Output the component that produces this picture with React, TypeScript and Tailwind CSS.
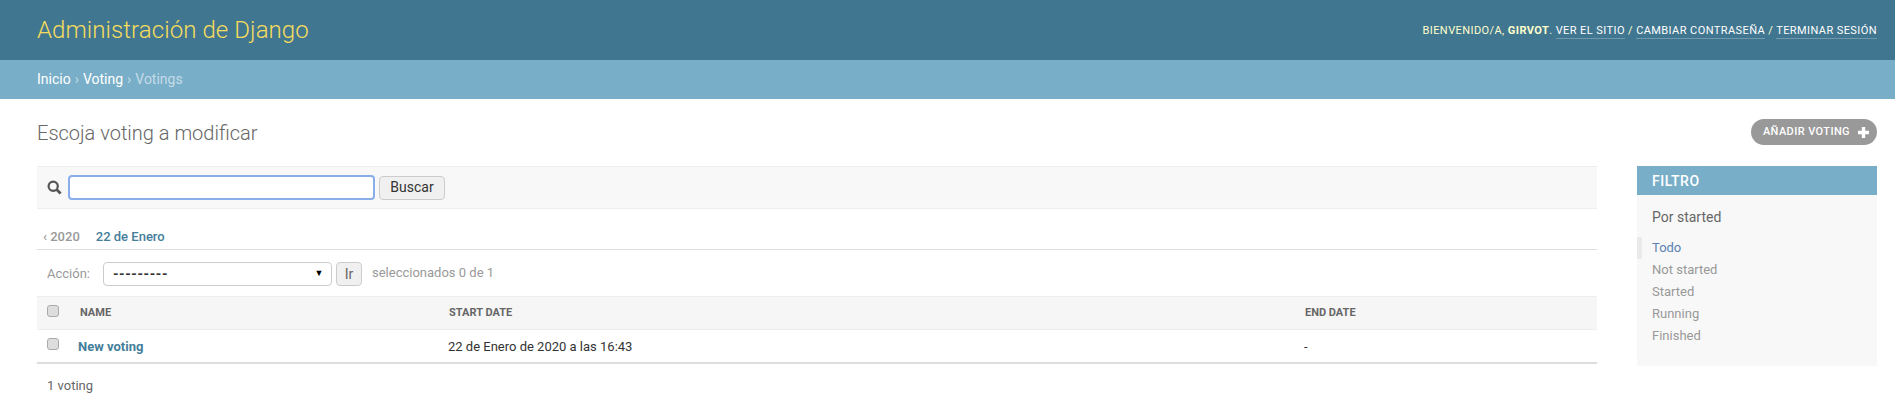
const Check = ({ className }: { className: string }) => (
  <span className={`block size-[12px] shrink-0 rounded-[3px] border border-[#aaa] bg-[#ddd] ${className}`} />
);

export default function App() {
  return (
    <div className="h-[401px] overflow-hidden bg-white font-['Roboto',sans-serif] font-normal text-[#333]">
      <header className="flex h-[60px] items-center justify-between bg-[#417690] pl-[37px] pr-[18px]">
        <h1 className="text-[24px] leading-none font-light tracking-[0.08px] text-[#f5dd5d]">Administración de Django</h1>
        <div className="text-[11px] leading-none tracking-[0.42px] text-[#ffc] uppercase">
          Bienvenido/a, <strong className="font-bold">girvot</strong>.{' '}
          <a className="border-b border-[#ffffff40] pb-[1px] text-white">Ver el sitio</a> /{' '}
          <a className="border-b border-[#ffffff40] pb-[1px] text-white">Cambiar contraseña</a> /{' '}
          <a className="border-b border-[#ffffff40] pb-[1px] text-white">Terminar sesión</a>
        </div>
      </header>

      <div className="flex h-[39px] items-center bg-[#79aec8] pl-[37px] text-[14px] text-[#c4dce8]">
        <a className="text-white">Inicio</a>
        <span className="mx-[4px]">›</span>
        <a className="text-white">Voting</a>
        <span className="mx-[4px]">›</span>
        <span>Votings</span>
      </div>

      <main className="pl-[37px] pr-[18px]">
        <div className="flex h-[67px] items-start justify-between">
          <h2 className="mt-[21px] text-[20px] leading-[26px] font-light text-[#666]">Escoja voting a modificar</h2>
          <a className="mt-[20px] flex h-[26px] items-center gap-[8px] rounded-[15px] bg-[#999] pl-[12px] pr-[8px] text-[11px] font-medium tracking-[0.4px] text-white uppercase">
            Añadir voting
            <svg width="11" height="11" viewBox="0 0 11 11" fill="#fff"><path d="M3.8 0h3.4v3.8H11v3.4H7.200V11H3.800V7.200H0V3.800h3.800z" /></svg>
          </a>
        </div>

        <div className="flex gap-[40px]">
          <div className="w-[1560px]">
            <div className="flex h-[43px] items-center gap-[4px] border-y border-[#eee] bg-[#f8f8f8] pl-[10px]">
              <svg width="15" height="15" viewBox="0 0 15 15" fill="none" stroke="#555" className="mr-[2px]">
                <circle cx="6.2" cy="6.2" r="4.6" strokeWidth="2.200" />
                <path d="M9.600 9.600l4 4" strokeWidth="2.800" />
              </svg>
              <input className="h-[25px] w-[307px] rounded-[4px] border-2 border-[#8aaeea] bg-white outline-none" />
              <button className="h-[24px] w-[66px] rounded-[4px] border border-[#ccc] bg-[#f0f0f0] text-[14px] text-[#333]">Buscar</button>
            </div>

            <div className="flex h-[41px] items-end gap-[16px] border-b border-[#ddd] pb-[4px] pl-[6px] text-[13px] font-medium leading-[16px]">
              <span className="text-[#999]">‹ 2020</span>
              <a className="text-[#447e9b]">22 de Enero</a>
            </div>

            <div className="flex h-[46px] items-center pl-[10px] pt-[2px] text-[13px] text-[#999]">
              <span>Acción:</span>
              <div className="ml-[13px] flex h-[24px] w-[229px] items-center justify-between rounded-[4px] border border-[#ccc] bg-white pl-[9px] pr-[7px] text-[14px] font-bold tracking-[0.6px] text-[#333]">
                ---------
                <span className="text-[9px] text-black">▼</span>
              </div>
              <button className="ml-[4px] h-[24px] w-[26px] rounded-[4px] border border-[#ccc] bg-[#f0f0f0] text-[14px] text-[#666]">Ir</button>
              <span className="ml-[10px] pb-[2px]">seleccionados 0 de 1</span>
            </div>

            <div className="flex h-[34px] items-center border-y border-[#eee] bg-[#f6f6f6] text-[11px] font-bold text-[#666] uppercase">
              <Check className="mb-[5px] ml-[10px]" />
              <span className="ml-[21px] w-[369px]">Name</span>
              <span className="w-[856px]">Start date</span>
              <span>End date</span>
            </div>

            <div className="flex h-[34px] items-center border-b-2 border-[#ddd] text-[13px]">
              <Check className="mb-[5px] ml-[10px]" />
              <a className="ml-[19px] w-[370px] pt-[2px] font-bold text-[#447e9b]">New voting</a>
              <span className="w-[856px] pt-[2px] text-[#333]">22 de Enero de 2020 a las 16:43</span>
              <span className="pt-[2px]">-</span>
            </div>

            <p className="mt-[14px] pl-[10px] text-[13px] leading-[16px] text-[#666]">1 voting</p>
          </div>

          <aside className="h-[200px] w-[240px] bg-[#f8f8f8]">
            <h3 className="flex h-[29px] items-center bg-[#79aec8] pl-[15px] pt-[1px] text-[14px] font-medium tracking-[0.5px] text-white uppercase">Filtro</h3>
            <h4 className="pl-[15px] pt-[13px] text-[14px] leading-[18px] text-[#666]">Por started</h4>
            <ul className="mt-[11px] text-[13px] leading-[22px] text-[#999]">
              <li className="border-l-[5px] border-[#eaeaea] pl-[10px] text-[#5b80b2]">Todo</li>
              <li className="pl-[15px]">Not started</li>
              <li className="pl-[15px]">Started</li>
              <li className="pl-[15px]">Running</li>
              <li className="pl-[15px]">Finished</li>
            </ul>
          </aside>
        </div>
      </main>
    </div>
  );
}
